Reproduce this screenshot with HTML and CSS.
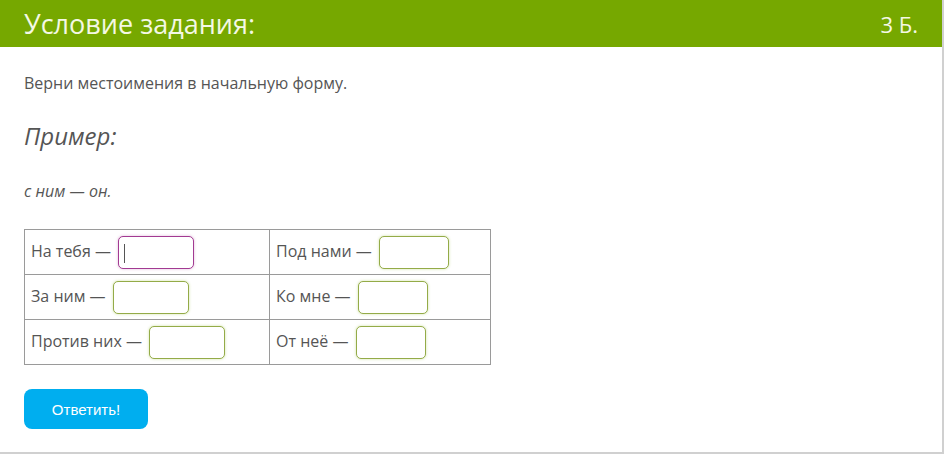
FILE: index.html
```html
<!DOCTYPE html>
<html lang="ru">

<head>
	<meta charset="UTF-8" />
	<meta name="viewport" content="width=device-width, initial-scale=1.0" />
	<title>Условие задания</title>
	<link rel="stylesheet" href="styles.css">
</head>

<body>
	<div class="task">
		<div class="task-head">
			<div class="task-title">Условие задания:</div>
			<div class="task-score">3 Б.</div>
		</div>
		<div class="task-body">
			<p class="task-text">Верни местоимения в начальную форму.</p>
			<div class="example-title">Пример:</div>
			<p class="example">с ним — он.</p>

			<table class="answers">
				<tr>
					<td class="col-left">На тебя — <input class="field field-active" type="text"></td>
					<td>Под нами — <input class="field" type="text"></td>
				</tr>
				<tr>
					<td class="col-left">За ним — <input class="field" type="text"></td>
					<td>Ко мне — <input class="field" type="text"></td>
				</tr>
				<tr>
					<td class="col-left">Против них — <input class="field" type="text"></td>
					<td>От неё — <input class="field" type="text"></td>
				</tr>
			</table>

			<button class="answer-btn">Ответить!</button>
		</div>
	</div>
</body>

</html>
```

FILE: styles.css
```css
body {
	margin: 0;
	font-family: "Open Sans", "Noto Sans", sans-serif;
	color: #555;
	background: #fff;
}

.task {
	width: 942px;
	height: 452px;
	border-right: 2px solid #d0d0d0;
	border-bottom: 2px solid #d0d0d0;
	overflow: hidden;
}

.task-head {
	display: flex;
	justify-content: space-between;
	align-items: center;
	height: 47px;
	padding: 0 24px 0 24px;
	background: #76a800;
	color: #f4f8e4;
}

.task-title {
	font-size: 27px;
}

.task-score {
	font-size: 22px;
}

.task-body {
	padding: 0 24px;
}

.task-text {
	margin: 24px 0 0;
	font-size: 16px;
	line-height: 24px;
}

.example-title {
	margin-top: 25px;
	font-size: 24px;
	font-style: italic;
	line-height: 32px;
}

.example {
	margin: 27px 0 0;
	font-size: 16px;
	font-style: italic;
	line-height: 24px;
}

/* table */
.answers {
	margin-top: 26px;
	border-collapse: collapse;
	width: 467px;
}

.answers td {
	height: 45px;
	padding: 0 6px;
	border: 1px solid #9a9a9a;
	font-size: 16px;
	box-sizing: border-box;
	white-space: nowrap;
}

.answers .col-left {
	width: 245px;
}

.field {
	width: 70px;
	height: 33px;
	box-sizing: border-box;
	margin-left: 3px;
	vertical-align: middle;
	border: 1px solid #94ab48;
	border-radius: 5px;
	box-shadow: 0 0 3px rgba(150, 190, 60, 0.45);
	outline: none;
	background: #fff;
}

.col-left .field {
	width: 76px;
}

.field-active {
	border-color: #a23a92;
	box-shadow: 0 0 3px rgba(170, 60, 150, 0.35);
	background: linear-gradient(#555, #555) 5px 7px / 1px 19px no-repeat, #fff;
}

/* button */
.answer-btn {
	display: block;
	margin-top: 24px;
	width: 124px;
	height: 40px;
	border: none;
	border-radius: 8px;
	background: #00aeef;
	color: #fff;
	font-family: "Liberation Sans", Arial, sans-serif;
	font-size: 15px;
	cursor: pointer;
}
```
